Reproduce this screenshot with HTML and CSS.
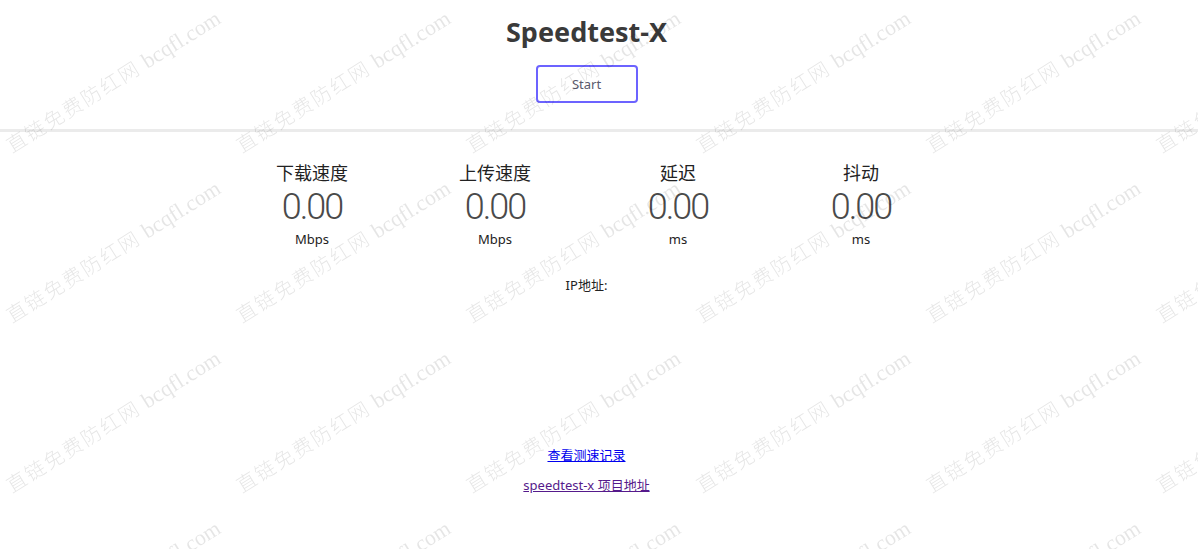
FILE: index.html
```html
<!DOCTYPE html>
<html lang="zh-CN">
<head>
<meta charset="utf-8">
<title>Speedtest-X</title>
<link rel="stylesheet" href="styles.css">
</head>
<body>
<header class="top">
  <h1 class="title">Speedtest-X</h1>
  <button class="start-btn" type="button">Start</button>
</header>
<div class="divider"></div>
<main class="main">
  <section class="stats">
    <div class="stat">
      <div class="stat-label">下载速度</div>
      <div class="stat-value">0.00</div>
      <div class="stat-unit">Mbps</div>
    </div>
    <div class="stat">
      <div class="stat-label">上传速度</div>
      <div class="stat-value">0.00</div>
      <div class="stat-unit">Mbps</div>
    </div>
    <div class="stat">
      <div class="stat-label">延迟</div>
      <div class="stat-value">0.00</div>
      <div class="stat-unit">ms</div>
    </div>
    <div class="stat">
      <div class="stat-label">抖动</div>
      <div class="stat-value">0.00</div>
      <div class="stat-unit">ms</div>
    </div>
  </section>
  <div class="ip">IP地址:</div>
  <nav class="links">
    <a class="link" href="#records">查看测速记录</a>
    <a class="link visited" href="#project">speedtest-x 项目地址</a>
  </nav>
</main>
<div class="watermark" aria-hidden="true">
  <span class="wm"><i>直链免费防红网</i> bcqfl.com</span>
  <span class="wm"><i>直链免费防红网</i> bcqfl.com</span>
  <span class="wm"><i>直链免费防红网</i> bcqfl.com</span>
  <span class="wm"><i>直链免费防红网</i> bcqfl.com</span>
  <span class="wm"><i>直链免费防红网</i> bcqfl.com</span>
  <span class="wm"><i>直链免费防红网</i> bcqfl.com</span>
  <span class="wm"><i>直链免费防红网</i> bcqfl.com</span>
  <span class="wm"><i>直链免费防红网</i> bcqfl.com</span>
  <span class="wm"><i>直链免费防红网</i> bcqfl.com</span>
  <span class="wm"><i>直链免费防红网</i> bcqfl.com</span>
  <span class="wm"><i>直链免费防红网</i> bcqfl.com</span>
  <span class="wm"><i>直链免费防红网</i> bcqfl.com</span>
  <span class="wm"><i>直链免费防红网</i> bcqfl.com</span>
  <span class="wm"><i>直链免费防红网</i> bcqfl.com</span>
  <span class="wm"><i>直链免费防红网</i> bcqfl.com</span>
  <span class="wm"><i>直链免费防红网</i> bcqfl.com</span>
  <span class="wm"><i>直链免费防红网</i> bcqfl.com</span>
  <span class="wm"><i>直链免费防红网</i> bcqfl.com</span>
  <span class="wm"><i>直链免费防红网</i> bcqfl.com</span>
  <span class="wm"><i>直链免费防红网</i> bcqfl.com</span>
  <span class="wm"><i>直链免费防红网</i> bcqfl.com</span>
  <span class="wm"><i>直链免费防红网</i> bcqfl.com</span>
  <span class="wm"><i>直链免费防红网</i> bcqfl.com</span>
  <span class="wm"><i>直链免费防红网</i> bcqfl.com</span>
</div>
</body>
</html>
```

FILE: styles.css
```css
* { box-sizing: border-box; }

html, body {
  margin: 0;
  padding: 0;
  background: #ffffff;
}

body {
  font-family: "Noto Sans", "Noto Sans CJK SC", sans-serif;
  color: #333333;
  overflow: hidden;
  height: 549px;
}

.top {
  display: flex;
  flex-direction: column;
  align-items: center;
  width: 1173px;
}

.title {
  margin: 15px 0 0;
  font-family: "Noto Sans", sans-serif;
  font-size: 27px;
  font-weight: 700;
  line-height: 34px;
  color: #3a3a3a;
}

.start-btn {
  margin-top: 16px;
  width: 102px;
  height: 38px;
  border: 2px solid #6c63ff;
  border-radius: 4px;
  background: #ffffff;
  font-family: "Noto Sans", sans-serif;
  font-size: 13px;
  color: #5a5a6e;
  padding: 0;
}

.divider {
  margin-top: 26px;
  height: 3px;
  background: #ebebeb;
}

.main {
  width: 1173px;
  display: flex;
  flex-direction: column;
  align-items: center;
}

.stats {
  margin-top: 28px;
  display: grid;
  grid-template-columns: repeat(4, 183px);
}

.stat {
  display: flex;
  flex-direction: column;
  align-items: center;
}

.stat-label {
  font-family: "Noto Sans CJK SC", sans-serif;
  font-size: 18px;
  line-height: 24px;
  color: #222222;
}

.stat-value {
  margin-top: 3px;
  font-family: Roboto, "Noto Sans", sans-serif;
  font-weight: 300;
  font-size: 36px;
  line-height: 40px;
  letter-spacing: -2px;
  color: #4a4a4a;
}

.stat-unit {
  margin-top: 3px;
  font-size: 13px;
  line-height: 18px;
  color: #222222;
}

.ip {
  margin-top: 28px;
  font-family: "Noto Sans", "Noto Sans CJK SC", sans-serif;
  font-size: 13px;
  line-height: 18px;
  color: #222222;
}

.links {
  margin-top: 152px;
  display: flex;
  flex-direction: column;
  align-items: center;
  gap: 12px;
}

.link {
  font-family: "Noto Sans", "Noto Sans CJK SC", sans-serif;
  font-size: 13px;
  line-height: 18px;
  color: #0000ee;
  text-decoration: underline;
}

.link.visited { color: #551a8b; }

.watermark {
  position: fixed;
  left: 14px;
  top: -13px;
  display: grid;
  grid-template-columns: repeat(6, 230px);
  grid-auto-rows: 170px;
  pointer-events: none;
  z-index: 10;
}

.wm {
  align-self: end;
  justify-self: start;
  white-space: nowrap;
  transform-origin: 0 100%;
  transform: rotate(-32deg);
  font-family: "Liberation Serif", serif;
  font-size: 22px;
  line-height: 22px;
  color: rgba(0, 0, 0, 0.1);
}

.wm i {
  font-style: normal;
  font-family: "Noto Sans CJK SC", sans-serif;
  font-weight: 300;
  font-size: 20px;
  letter-spacing: 2px;
}
```
